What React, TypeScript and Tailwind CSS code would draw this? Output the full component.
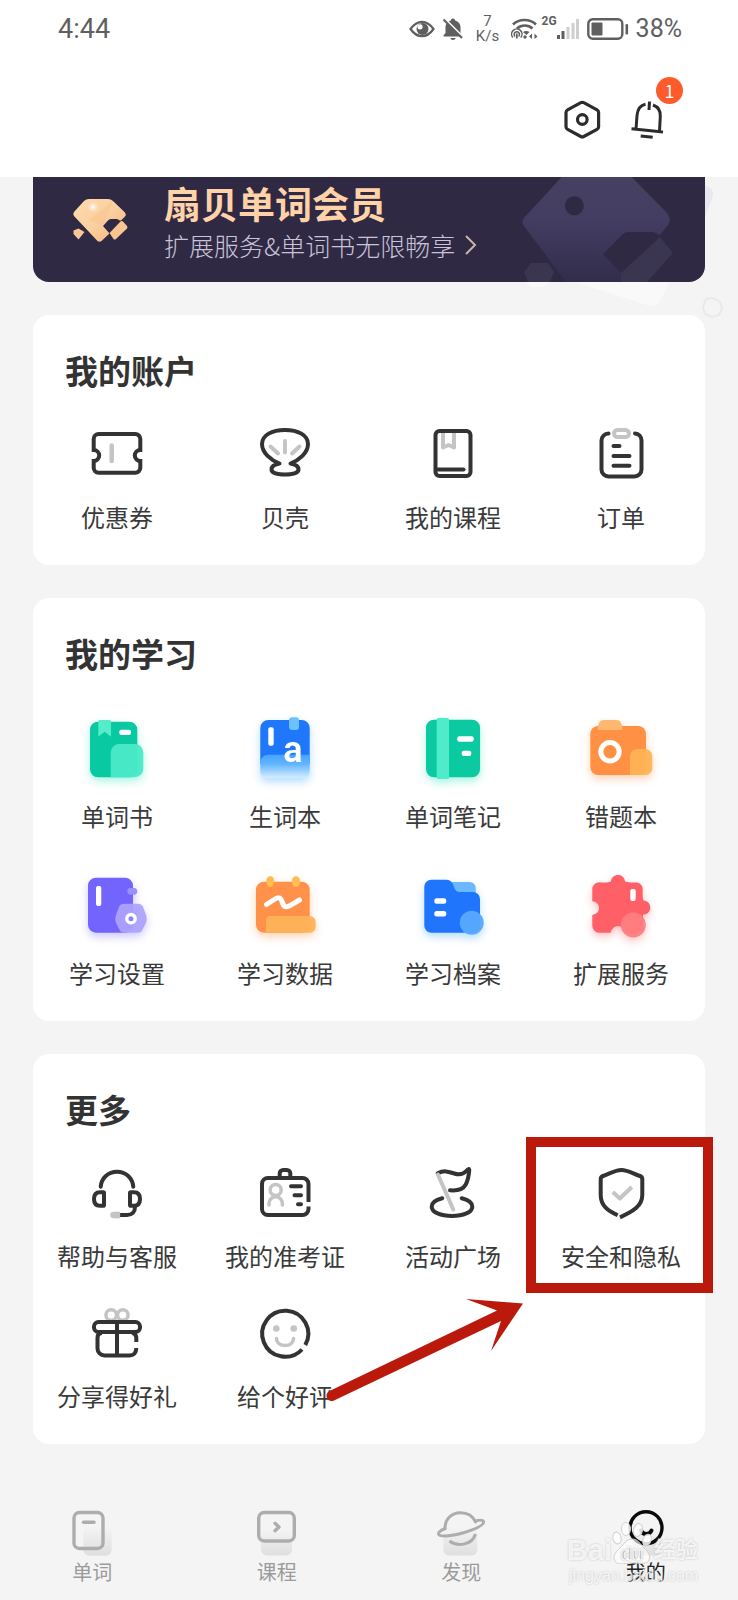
import type { ReactNode } from "react";

type Item = { label: string; icon: ReactNode; highlighted?: boolean };

/* ---------- outline icons (56 x 56) ---------- */

function Outline({ children }: { children: ReactNode }) {
  return (
    <svg
      viewBox="0 0 56 56"
      className="h-14 w-14 overflow-visible"
      fill="none"
      stroke="#333333"
      strokeWidth="4"
      strokeLinecap="round"
      strokeLinejoin="round"
      aria-hidden="true"
    >
      {children}
    </svg>
  );
}

const GREY = "#c4c4c4";

const couponIcon = (
  <Outline>
    <path
      strokeLinejoin="miter"
      d="M4.700 25V14a5 5 0 0 1 5-5h36.600a5 5 0 0 1 5 5v11a5.500 5.500 0 0 0 0 11v6.700a5 5 0 0 1-5 5H9.700a5 5 0 0 1-5-5V36a5.500 5.500 0 0 0 0-11Z"
    />
    <path stroke={GREY} strokeWidth="4.500" d="M22.700 20.500v15.500" />
  </Outline>
);

const shellIcon = (
  <Outline>
    <path d="M22.500 38.500C14 35 5 28 5 19 5 10 15 5 28 5s23 5 23 14c0 9-9 16-17.500 19.500 5.500 1 8 3.500 8 6 0 3.500-6.500 5-13.500 5s-13.500-1.500-13.500-5c0-2.500 2.500-5 8-6Z" />
    <path stroke={GREY} d="M28 16v11.500M13.500 21.500l7.500 7M42.500 21.500l-7.500 7" />
  </Outline>
);

const courseIcon = (
  <Outline>
    <path stroke={GREY} d="M18 8v14.500l5.500-2.500 5.500 2.500V8" />
    <rect x="10.500" y="6" width="35" height="45" rx="4" />
    <path d="M13 44.500h25.500" />
  </Outline>
);

const orderIcon = (
  <Outline>
    <path d="M15.500 8.500a7 7 0 0 0-7 7V44.500a7 7 0 0 0 7 7h26a7 7 0 0 0 7-7v-29a7 7 0 0 0-6.500-7" />
    <rect stroke={GREY} x="21" y="5" width="15" height="7" rx="3.500" />
    <path d="M20.500 21h6M20.500 31h16M20.500 40.700h16" />
  </Outline>
);

const supportIcon = (
  <Outline>
    <path d="M11.700 22.700C12.500 14 19 7.800 28 7.800s15.500 6.200 16.300 14.900" />
    <path d="M11 28.300h3.200c.6 0 .8.300.8.800v11.800c0 .6-.2.800-.8.800H11c-4 0-6-2-6-6.700s2-6.700 6-6.700ZM45 28.300h-3.200c-.6 0-.8.300-.8.800v11.800c0 .6.200.8.800.8H45c4 0 6-2 6-6.700s-2-6.700-6-6.700Z" />
    <path strokeLinecap="butt" d="M46 43c0 5-3 8-8 8h-7" />
    <path stroke={GREY} strokeWidth="6.500" d="M24.500 51h3.500" />
    <path stroke={GREY} strokeLinecap="butt" strokeWidth="6.500" d="M27 51h4" />
  </Outline>
);

const idCardIcon = (
  <Outline>
    <path strokeLinecap="butt" d="M51.500 38V20a6 6 0 0 0-6-6H11a6 6 0 0 0-6 6v25a6 6 0 0 0 6 6h34.500a6 6 0 0 0 6-6v-2.500" />
    <path d="M22.700 13v-3.500a3.500 3.500 0 0 1 3.500-3.500h3.600a3.500 3.500 0 0 1 3.500 3.500V13" />
    <g stroke={GREY} strokeWidth="3.500">
      <circle cx="18.700" cy="26" r="5.500" />
      <path d="M12 41v-1.500a6.700 6.700 0 0 1 13.400 0V41" />
    </g>
    <path d="M34 22.300h10M37.500 31.300H44M41 40.300h3" />
  </Outline>
);

const plazaIcon = (
  <Outline>
    <path d="M12.700 9.300c7-3.600 11.500-1.400 16.500.2s9 .8 12-2.500c2-2.200 3.200-2.700 3-.5-.5 6-1.200 10-3.600 14.300-2.800 5-7.600 6.200-15.600 5.500" />
    <path stroke={GREY} d="M12.900 10.500 28.300 45.500" />
    <path d="M17.300 34.300C11 35.800 6.700 39 6.700 42.700c0 5.600 9 9.300 20.300 9.300s20.300-3.700 20.300-9.300c0-3.700-4.300-6.900-10.600-8.400" />
  </Outline>
);

const shieldIcon = (
  <Outline>
    <path strokeLinecap="butt" d="M27 53.300C40 47.500 49.300 42 49.300 31V15.500c0-2-.8-3-2.300-3.500-6.500-2-12-6-18.500-6S16 10 10 12c-1.500.5-2.300 1.500-2.300 3.500V31c0 10.500 7 15.800 17 20.300" />
    <path stroke={GREY} strokeLinecap="butt" d="m19.800 28 7 6.500L38.800 23" />
  </Outline>
);

const giftIcon = (
  <Outline>
    <g stroke={GREY} strokeWidth="3.500">
      <circle cx="22.200" cy="11" r="5.300" />
      <circle cx="33.800" cy="11" r="5.300" />
    </g>
    <rect x="5" y="18" width="46" height="10" rx="4.500" fill="#fff" />
    <path d="M13 29c-3 0-4.500 1.500-4.500 5v10.500a7 7 0 0 0 7 7h25c4 0 6.800-2.500 6.800-7.500M47.300 38v-3c0-4-1.500-6-4.500-6" strokeLinecap="butt" />
    <path d="M28 18v33" strokeLinecap="butt" />
  </Outline>
);

const smileIcon = (
  <Outline>
    <path strokeLinecap="butt" d="M45 45.500A23 23 0 1 1 48.300 41" />
    <circle cx="19.300" cy="24.500" r="3.300" fill={GREY} stroke="none" />
    <circle cx="36.700" cy="24.500" r="3.300" fill={GREY} stroke="none" />
    <path stroke={GREY} strokeWidth="3.500" d="M19.500 34.500c.5 9.300 16.500 9.300 17 0" />
  </Outline>
);

/* ---------- filled icons (64 x 64) ---------- */

function Filled({ glow, children }: { glow: string; children: ReactNode }) {
  return (
    <svg viewBox="0 0 64 64" className={"h-16 w-16 overflow-visible " + glow} aria-hidden="true">
      {children}
    </svg>
  );
}

const GLOW_GREEN = "[filter:drop-shadow(0_4px_4px_rgba(60,235,190,0.45))]";
const GLOW_BLUE = "[filter:drop-shadow(0_4px_4px_rgba(90,180,255,0.45))]";
const GLOW_ORANGE = "[filter:drop-shadow(0_4px_4px_rgba(255,160,90,0.45))]";
const GLOW_PURPLE = "[filter:drop-shadow(0_4px_4px_rgba(130,115,255,0.4))]";
const GLOW_RED = "[filter:drop-shadow(0_4px_4px_rgba(255,110,110,0.4))]";

const wordBookIcon = (
  <Filled glow={GLOW_GREEN}>
    <rect x="5" y="5.700" width="47.300" height="55.600" rx="8" fill="#08c9a1" />
    <path d="M13.300 5.500c0-1 .6-1.500 1.500-1.500H24.500c1 0 1.500.5 1.500 1.500v15.200l-6.400-5-6.300 5Z" fill="#55edc8" />
    <rect x="34.300" y="13.700" width="11.700" height="5.300" rx="2" fill="#fff" />
    <path d="M25.700 61.300V36.500a8.500 8.500 0 0 1 8.500-8.500h15.600a8.500 8.500 0 0 1 8.500 8.500v16.300a8.500 8.500 0 0 1-8.500 8.500Z" fill="#4aeac8" opacity=".95" />
  </Filled>
);

const newWordsIcon = (
  <Filled glow={GLOW_BLUE}>
    <defs>
      <linearGradient id="newWordsFade" x1="0" y1="0" x2="0" y2="1">
        <stop offset="0" stopColor="#45a4ff" />
        <stop offset=".4" stopColor="#62b5ff" />
        <stop offset="1" stopColor="#d6edff" />
      </linearGradient>
    </defs>
    <path d="M7.300 48V12a8 8 0 0 1 8-8h33.400a8 8 0 0 1 8 8v36Z" fill="#1f78fb" />
    <path d="M7.300 46.700a8 8 0 0 1 8-8h41.400V56a6 6 0 0 1-6 6H13.300a6 6 0 0 1-6-6Z" fill="url(#newWordsFade)" />
    <rect x="36" y="1.300" width="10" height="12.700" rx="3" fill="#6cc1ff" />
    <rect x="15.300" y="11.300" width="5.400" height="18.400" rx="2" fill="#fff" />
    <text x="40" y="45.500" textAnchor="middle" fill="#fff" fontFamily="Roboto, sans-serif" fontWeight="600" fontSize="36">
      a
    </text>
  </Filled>
);

const notesIcon = (
  <Filled glow={GLOW_GREEN}>
    <rect x="5" y="3.700" width="54" height="57.600" rx="8" fill="#0bc9a1" />
    <rect x="15.700" y="2" width="12.300" height="61" rx="1.500" fill="#4feccb" />
    <rect x="36.300" y="20.300" width="16.400" height="5.400" rx="2" fill="#fff" />
    <rect x="40.700" y="34.700" width="9.600" height="5.400" rx="2" fill="#fff" />
  </Filled>
);

const mistakesIcon = (
  <Filled glow={GLOW_ORANGE}>
    <rect x="1.300" y="10" width="55.700" height="49" rx="8" fill="#ff9044" />
    <path d="M8.700 14c0-7 2-10 6-10h12.600c4 0 6 3 6 10Z" fill="#ffb871" />
    <circle cx="21" cy="35.700" r="9.200" fill="none" stroke="#fff" strokeWidth="5" />
    <path d="M41 59V40a7 7 0 0 1 7-7h8.300a7 7 0 0 1 7 7v12a7 7 0 0 1-7 7Z" fill="#ffb355" opacity=".95" />
  </Filled>
);

const studySettingsIcon = (
  <Filled glow={GLOW_PURPLE}>
    <rect x="3" y="4.700" width="45" height="55" rx="8" fill="#7364fd" />
    <rect x="11" y="13" width="5.300" height="20" rx="2" fill="#fff" />
    <path d="M42.300 18.300c0-2.500 1.700-3.600 3.500-3.300 1 .1 2 .1 3 0 2-.3 3.500 1 3.500 3.300s-1.500 3.700-3.500 3.400c-1-.1-2-.1-3 0-1.800.300-3.500-.900-3.500-3.400Z" fill="#9c90fc" />
    <path d="M38.500 30.700h15a5 5 0 0 1 4.300 2.500l3 8c1.200 3 1.200 6 0 9l-3.600 7c-.8 1.600-2.200 2.500-4 2.500H38.800c-1.800 0-3.200-.9-4-2.500l-3.600-7c-1.200-3-1.200-6 0-9l3-8a5 5 0 0 1 4.300-2.500Z" fill="#aea2fd" opacity=".92" />
    <circle cx="46" cy="45.700" r="4.200" fill="#8f82f8" stroke="#fff" strokeWidth="3.400" />
  </Filled>
);

const studyDataIcon = (
  <Filled glow={GLOW_ORANGE}>
    <rect x="3" y="8.700" width="53.700" height="51" rx="8" fill="#ff914a" />
    <path d="M13.500 10c-.7-4 1-6.700 3.800-6.700s4.500 2.700 3.800 6.700c-.4 2.700-1.800 4-3.800 4s-3.400-1.300-3.800-4ZM39.200 10c-.7-4 1-6.700 3.800-6.700s4.500 2.700 3.800 6.700c-.4 2.700-1.800 4-3.800 4s-3.400-1.300-3.800-4Z" fill="#ffbe4f" />
    <path d="M13.500 31.500 22 26c4-2.500 6-.8 7 2.500 1.500 5.500 4 6.500 8 4.200L46.500 27" fill="none" stroke="#fff" strokeWidth="5" strokeLinecap="round" strokeLinejoin="round" />
    <path d="M13 59.700V47.500c0-3 1.500-4.500 4.500-4.500h39.200a6 6 0 0 1 6 6v4.700a6 6 0 0 1-6 6Z" fill="#ffb358" opacity=".95" />
  </Filled>
);

const studyArchiveIcon = (
  <Filled glow={GLOW_BLUE}>
    <path d="M28 9h20.700a6 6 0 0 1 6 6v8H36Z" fill="#6cb8ff" />
    <path d="M3.300 13.700a7 7 0 0 1 7-7h14.900c3.500 0 5.500 1.500 6.800 4.800l1.500 3.700c1.200 2.800 2.800 3.800 5.500 3.800h13a7 7 0 0 1 7 7v26.700a7 7 0 0 1-7 7H10.300a7 7 0 0 1-7-7Z" fill="#1f76fd" />
    <rect x="13.300" y="25.300" width="12" height="5.400" rx="2.500" fill="#fff" />
    <rect x="13.300" y="38" width="12" height="5.400" rx="2.500" fill="#fff" />
    <circle cx="50.700" cy="49.700" r="12" fill="#58a9ff" opacity=".95" />
  </Filled>
);

const extendIcon = (
  <Filled glow={GLOW_RED}>
    <path
      d="M10.500 9.200c4 .3 8 .8 11.300-.7C22.500 4.500 25 2 29 2s6.500 2.500 7 6.500c3.500 1.200 7 1 10.500 1 4.500 0 7.200 2.700 7.200 7 0 3.500-.5 7.500.8 11 4.200.2 6.800 3.200 6.800 7 0 4.200-2.800 7-7.300 7.200v11a7 7 0 0 1-7 7H36.500c-1.500-4.500-4-6.700-7.500-6.700s-6 2.200-7.500 6.700H10.300a7 7 0 0 1-7-7V42c4.500-.8 6.700-3.500 6.700-7s-2.200-6-6.700-6.700V16.200a7 7 0 0 1 7.200-7Z"
      fill="#ff6068"
    />
    <rect x="41.300" y="16" width="5.400" height="12" rx="2" fill="#fff" />
    <circle cx="44.300" cy="52" r="12.500" fill="#ff7e80" opacity=".95" />
  </Filled>
);

/* ---------- tab bar icons (48 x 48) ---------- */

function TabIcon({ color, children }: { color: string; children: ReactNode }) {
  return (
    <svg viewBox="0 0 48 48" className="h-12 w-12 overflow-visible" fill="none" stroke={color} strokeWidth="3.400" strokeLinecap="round" strokeLinejoin="round" aria-hidden="true">
      <defs>
        <linearGradient id="tabShade" x1="0" y1="0" x2="0" y2="1">
          <stop offset="0" stopColor="#dcdcdc" stopOpacity="0" />
          <stop offset="1" stopColor="#dfdfdf" />
        </linearGradient>
      </defs>
      {children}
    </svg>
  );
}

const tabs = [
  {
    label: "单词",
    icon: (
      <TabIcon color="#adadad">
        <rect x="15.300" y="18.700" width="28.400" height="29" rx="6" fill="url(#tabShade)" stroke="none" />
        <rect x="6" y="4.500" width="29" height="36" rx="5.500" />
        <path d="M15.500 14.300h10.500" />
      </TabIcon>
    ),
  },
  {
    label: "课程",
    icon: (
      <TabIcon color="#adadad">
        <rect x="8" y="22" width="31" height="25.500" rx="6" fill="url(#tabShade)" stroke="none" />
        <rect x="5.700" y="4.500" width="35.600" height="28.500" rx="5.500" />
        <path d="m22 15.300 4 3.700-4 3.700" />
      </TabIcon>
    ),
  },
  {
    label: "发现",
    icon: (
      <TabIcon color="#adadad">
        <rect x="6.300" y="20" width="34" height="27.500" rx="6" fill="url(#tabShade)" stroke="none" />
        <path d="M8 20.500C8 11 14.500 4.700 23.300 4.700c7 0 12.700 3.300 15.200 9.300" strokeWidth="3" />
        <path d="M12.500 33c8.500 6.500 23 3.500 26-7" strokeWidth="3" strokeLinecap="butt" />
        <path d="M8 20.500c-5 2-7.500 4.500-6 6.300 2.500 2.500 15 1 25.500-2.300S47.500 17 46.500 13.500c-.6-1.700-3.500-1.700-7.500-.9" strokeWidth="3" />
      </TabIcon>
    ),
  },
  {
    label: "我的",
    icon: (
      <TabIcon color="#0b0b0b">
        <rect x="11" y="20" width="28" height="27.500" rx="6" fill="url(#tabShade)" stroke="none" />
        <circle cx="24" cy="19.700" r="16" />
        <path d="M19 22.500c1.500 4.500 8.500 4.500 10.500 0" strokeWidth="4" />
      </TabIcon>
    ),
  },
];

/* ---------- sections ---------- */

const account: Item[] = [
  { label: "优惠券", icon: couponIcon },
  { label: "贝壳", icon: shellIcon },
  { label: "我的课程", icon: courseIcon },
  { label: "订单", icon: orderIcon },
];

const study: Item[] = [
  { label: "单词书", icon: wordBookIcon },
  { label: "生词本", icon: newWordsIcon },
  { label: "单词笔记", icon: notesIcon },
  { label: "错题本", icon: mistakesIcon },
  { label: "学习设置", icon: studySettingsIcon },
  { label: "学习数据", icon: studyDataIcon },
  { label: "学习档案", icon: studyArchiveIcon },
  { label: "扩展服务", icon: extendIcon },
];

const more: Item[] = [
  { label: "帮助与客服", icon: supportIcon },
  { label: "我的准考证", icon: idCardIcon },
  { label: "活动广场", icon: plazaIcon },
  { label: "安全和隐私", icon: shieldIcon, highlighted: true },
  { label: "分享得好礼", icon: giftIcon },
  { label: "给个好评", icon: smileIcon },
];

function Card({ title, items, gridClass, children }: { title: string; items: Item[]; gridClass: string; children?: ReactNode }) {
  return (
    <section className="relative mt-[33px] rounded-2xl bg-white pt-9 pb-8">
      <h2 className="px-8 text-[33px] leading-[38px] font-bold text-[#333333]">{title}</h2>
      <ul className={"grid grid-cols-4 " + gridClass}>
        {items.map((item) => (
          <li key={item.label} className="relative">
            <a href="#" className="flex flex-col items-center gap-5">
              {item.icon}
              <span className="text-2xl leading-8 whitespace-nowrap text-[#3a3a3a]">{item.label}</span>
            </a>
            {item.highlighted && (
              <span className="pointer-events-none absolute -top-[27px] -right-2 -bottom-[21px] -left-[11px] border-[10px] border-[#bb190b]" />
            )}
          </li>
        ))}
      </ul>
      {children}
    </section>
  );
}

function StatusBar() {
  return (
    <div className="flex h-14 items-center justify-between pt-0.5 pr-14 pl-[58px] font-[Roboto,sans-serif] text-[#5f5f5f]">
      <span className="text-[27px] leading-8">4:44</span>
      <div className="flex items-center">
        <svg viewBox="0 0 26 18" className="h-[18px] w-[26px]" aria-hidden="true">
          <path d="M1.500 9C5 4 8.500 1.800 13 1.800S21 4 24.500 9C21 14 17.500 16.200 13 16.200S5 14 1.500 9Z" fill="none" stroke="#5f5f5f" strokeWidth="2.200" />
          <circle cx="13.500" cy="9" r="6" fill="#5f5f5f" />
          <circle cx="11" cy="6.800" r="2.600" fill="#fff" />
        </svg>
        <svg viewBox="0 0 22 24" className="ml-[7px] h-6 w-[22px]" aria-hidden="true">
          <path d="M11 1.500c1.300 0 2 .7 2 2 3.500.8 5.500 3.500 5.500 7V16l2 2.500v1H1.500v-1l2-2.500v-5.500c0-3.500 2-6.200 5.500-7 0-1.300.7-2 2-2ZM8.300 21h5.400c-.4 1.300-1.300 2-2.700 2s-2.300-.7-2.700-2Z" fill="#5f5f5f" />
          <path d="m2.500 1.500 19 19" stroke="#fff" strokeWidth="2" />
          <path d="m1.500 2.500 18.500 18.500" stroke="#5f5f5f" strokeWidth="2.200" />
        </svg>
        <span className="ml-3 flex w-6 flex-col items-center text-[15px] leading-[15px]">
          <span>7</span>
          <span>K/s</span>
        </span>
        <svg viewBox="0 0 28 24" className="ml-2.5 h-6 w-7" fill="none" stroke="#5f5f5f" aria-hidden="true">
          <path d="M3 7.500C9 1.500 20 1.500 26 7.500M7 11.500c4.500-4 11-4 15.500 0" strokeWidth="2.600" />
          <path d="M13 15c2-1.200 4.500-1.200 6.500 0l-3 3Z" fill="#5f5f5f" stroke="none" />
          <path d="M2.800 20.500a5.200 5.200 0 1 1 8 0M5 19.500a2.700 2.700 0 1 1 3.600 0" strokeWidth="1.500" />
          <path d="M6.800 16.500v5" strokeWidth="1.800" />
          <circle cx="15" cy="20" r="1.700" fill="#5f5f5f" stroke="none" />
          <path d="m19 19.500 3-3v5.500ZM27.500 19.500l-3-3v5.500Z" fill="#5f5f5f" stroke="none" />
        </svg>
        <span className="ml-1 self-start pt-0.5 text-[12px] leading-3 font-bold">2G</span>
        <svg viewBox="0 0 22 22" className="h-[22px] w-[22px]" aria-hidden="true">
          <rect x="0" y="17" width="3" height="4" fill="#5f5f5f" />
          <rect x="4.500" y="13" width="3" height="8" fill="#5f5f5f" />
          <rect x="9.500" y="9" width="3" height="12" fill="#cfcfcf" />
          <rect x="14.500" y="5" width="3" height="16" fill="#cfcfcf" />
          <rect x="19" y="1" width="3" height="20" fill="#cfcfcf" />
        </svg>
        <svg viewBox="0 0 42 22" className="ml-2 h-[22px] w-[42px]" aria-hidden="true">
          <rect x="1.300" y="1.300" width="34" height="19.400" rx="4.500" fill="none" stroke="#5f5f5f" strokeWidth="2.400" />
          <rect x="4.500" y="4.500" width="11" height="13" rx="1" fill="#5f5f5f" />
          <rect x="38.500" y="6" width="2.600" height="10.500" rx="1.200" fill="#5f5f5f" />
        </svg>
        <span className="ml-[7px] text-[25px] leading-8">38%</span>
      </div>
    </div>
  );
}

function Banner() {
  return (
    <a href="#" className="relative flex h-[105px] overflow-hidden rounded-b-2xl bg-[#2f2944] pl-[39px]">
      <svg viewBox="0 0 200 105" className="absolute top-0 right-0 h-[105px] w-[200px]" aria-hidden="true">
        <defs>
          <linearGradient id="fishShade" x1="0" y1="0" x2="0" y2="1">
            <stop offset="0" stopColor="#464061" />
            <stop offset=".4" stopColor="#433d62" />
            <stop offset="1" stopColor="#322d4a" />
          </linearGradient>
        </defs>
        <path d="M56.700 0h70L162 36q5 6 1 12l-8 10-7-3h-24q-5 0-8 4L98 77l19 20-2 8H61L19 49q-3-4 0-8Z" fill="url(#fishShade)" />
        <circle cx="69.300" cy="28.700" r="9.500" fill="#2f2944" />
        <path d="m155 60 13 16-26 29h-26V96Z" fill="#3a3550" />
        <path d="m19 95 7-9h17l6 9-4 10H23Z" fill="#3a3550" />
      </svg>
      <svg viewBox="0 0 56 46" className="mt-[21px] h-[46px] w-14 shrink-0" aria-hidden="true">
        <defs>
          <linearGradient id="goldShell" x1="0" y1="0" x2="1" y2="1">
            <stop offset="0" stopColor="#ffd9ae" />
            <stop offset=".5" stopColor="#fbd0a0" />
            <stop offset="1" stopColor="#f3b277" />
          </linearGradient>
          <radialGradient id="goldShine">
            <stop offset="0" stopColor="#fff" />
            <stop offset="1" stopColor="#ffe6cc" stopOpacity="0" />
          </radialGradient>
        </defs>
        <path d="M17 1h19q3 0 5 2l12 11.500q1.500 2 0 4l-3.500 3.500q-1 1-2.500 0L45 21h-6q-2 0-3.500 2L31 28l6.500 7.500-8 7.500q-2 1.500-4 0L2 18q-1.500-2 0-4L12 3q2-2 5-2Z" fill="url(#goldShell)" />
        <path d="M17 22 41 3 31 28Z" fill="#f8c28d" opacity=".5" />
        <circle cx="21" cy="9" r="6" fill="url(#goldShine)" />
        <path d="m1.500 32.500 5-2 6 3.500-6 7.500-5-5.500Z" fill="#f8c796" />
        <path d="m37.500 35 11-11.500q1.500-1 2.500 0l4 4.500q1 1.500 0 2.500L44 41q-1.500 1-2.500 0Z" fill="#f8c490" />
      </svg>
      <div className="relative ml-9 pt-2">
        <h1 className="text-[37px] leading-9 font-bold whitespace-nowrap text-[#ffd3a7]">扇贝单词会员</h1>
        <p className="mt-2 flex items-center gap-2.5 text-[25px] leading-8 font-light whitespace-nowrap text-[#c9c4da]">
          扩展服务&amp;单词书无限畅享
          <svg viewBox="0 0 12 22" className="h-[22px] w-3" fill="none" stroke="#c9b6a8" strokeWidth="2" aria-hidden="true">
            <path d="m1 2 9 9-9 9" />
          </svg>
        </p>
      </div>
    </a>
  );
}

function Watermark() {
  return (
    <div className="pointer-events-none absolute right-10 bottom-3 flex flex-col items-end font-['Liberation_Sans','Noto_Sans_CJK_SC',sans-serif] text-white/80 [text-shadow:0_0_2px_rgba(150,150,150,0.6)]" aria-hidden="true">
      <div className="flex h-9 items-end">
        <span className="text-[29px] leading-7 font-bold">Bai</span>
        <svg viewBox="0 0 42 44" className="h-11 w-[42px]" fill="#ffffff" fillOpacity=".85" stroke="#d0d0d0" strokeWidth="1">
          <ellipse cx="5" cy="18" rx="4" ry="6" transform="rotate(-15 5 18)" />
          <ellipse cx="14" cy="9" rx="4.500" ry="6.500" />
          <ellipse cx="26" cy="10" rx="4.500" ry="6.500" transform="rotate(12 26 10)" />
          <ellipse cx="35" cy="20" rx="4" ry="6" transform="rotate(20 35 20)" />
          <path d="M20 19c6 0 8 5 12 9s7 7 5 12-9 3-17 3-14 3-17-2 1-9 5-13 6-9 12-9Z" fillOpacity=".6" />
          <text x="20" y="40" textAnchor="middle" fontSize="18" fontWeight="700" fill="#c4c4c4" stroke="#ffffff" strokeWidth="1">
            du
          </text>
        </svg>
        <span className="text-[22px] leading-7 font-bold">经验</span>
      </div>
      <span className="text-base leading-6">jingyan.baidu.com</span>
    </div>
  );
}

export default function App() {
  return (
    <div className="relative flex min-h-screen flex-col bg-[#f4f4f4] font-['Noto_Sans_CJK_SC',sans-serif]">
      <header className="bg-white">
        <StatusBar />
        <div className="flex h-[121px] items-center justify-end gap-6 pt-1 pr-[71px]">
          <button type="button" aria-label="设置">
            <svg viewBox="0 0 40 40" className="h-10 w-10" fill="none" stroke="#2c2c2c" strokeWidth="3.200" aria-hidden="true">
              <path d="M17.800 3.700a3 3 0 0 1 3 0L34 10.800a3 3 0 0 1 1.600 2.700v14.200a3 3 0 0 1-1.600 2.700L20.800 37.500a3 3 0 0 1-3 0L4.600 30.400A3 3 0 0 1 3 27.700V13.500a3 3 0 0 1 1.600-2.700Z" />
              <circle cx="19.300" cy="20.500" r="4.800" />
            </svg>
          </button>
          <button type="button" aria-label="消息" className="relative">
            <svg viewBox="0 0 40 40" className="h-10 w-10" fill="none" stroke="#2c2c2c" strokeWidth="3" aria-hidden="true">
              <path d="M9 30.500 10 16.500C10.600 10 13.500 6.300 18.500 5.300M26 6c5 1.800 7.700 5.500 7.300 11.500L32.500 32M22.500 2.500 22 11M4.500 29.700 36 33M13.700 37l12 1.200" />
            </svg>
            <span className="absolute -top-[22px] -right-4 flex h-[27px] w-[27px] items-center justify-center rounded-full bg-[#fe5a2c] text-lg leading-none text-white">1</span>
          </button>
        </div>
      </header>

      <main className="relative px-[33px]">
        <svg viewBox="0 0 258 143" className="absolute top-0 right-0 h-[143px] w-[258px]" aria-hidden="true">
          <path d="M225 9q9 1 8 10l-8 21Z" fill="#e9e7f0" />
          <path d="M80 100h112l-12 24q-3 6-10 5Z" fill="#f9f9f9" />
          <path d="m45 104 6 6h12l7-6Z" fill="#f9f9f9" />
          <path d="m226 122 7-1 7 4 2 7-3 6-7 2-7-3-2-7Z" fill="none" stroke="#e9e9e9" strokeWidth="2" />
        </svg>
        <Banner />
        <Card title="我的账户" items={account} gridClass="mt-9" />
        <Card title="我的学习" items={study} gridClass="mt-11 gap-y-[41px]" />
        <Card title="更多" items={more} gridClass="mt-9 gap-y-8">
          <svg viewBox="0 0 202 108" className="pointer-events-none absolute top-[243px] left-[291px] h-[108px] w-[202px]" fill="#bb190b" aria-hidden="true">
            <path d="M5.500 94 173 13.500 142 2l57 4.500L167 54l10-30L10 103.500a5.200 5.200 0 0 1-4.500-9.500Z" />
          </svg>
        </Card>
      </main>

      <nav className="mt-auto grid grid-cols-4 pt-[60px] pb-4">
        {tabs.map((tab, i) => (
          <a
            key={tab.label}
            href="#"
            aria-current={i === 3 ? "page" : undefined}
            className={"flex flex-col items-center gap-1 text-xl leading-6 " + (i === 3 ? "text-[#222222]" : "text-[#9b9b9b]")}
          >
            {tab.icon}
            <span>{tab.label}</span>
          </a>
        ))}
      </nav>
      <Watermark />
    </div>
  );
}
